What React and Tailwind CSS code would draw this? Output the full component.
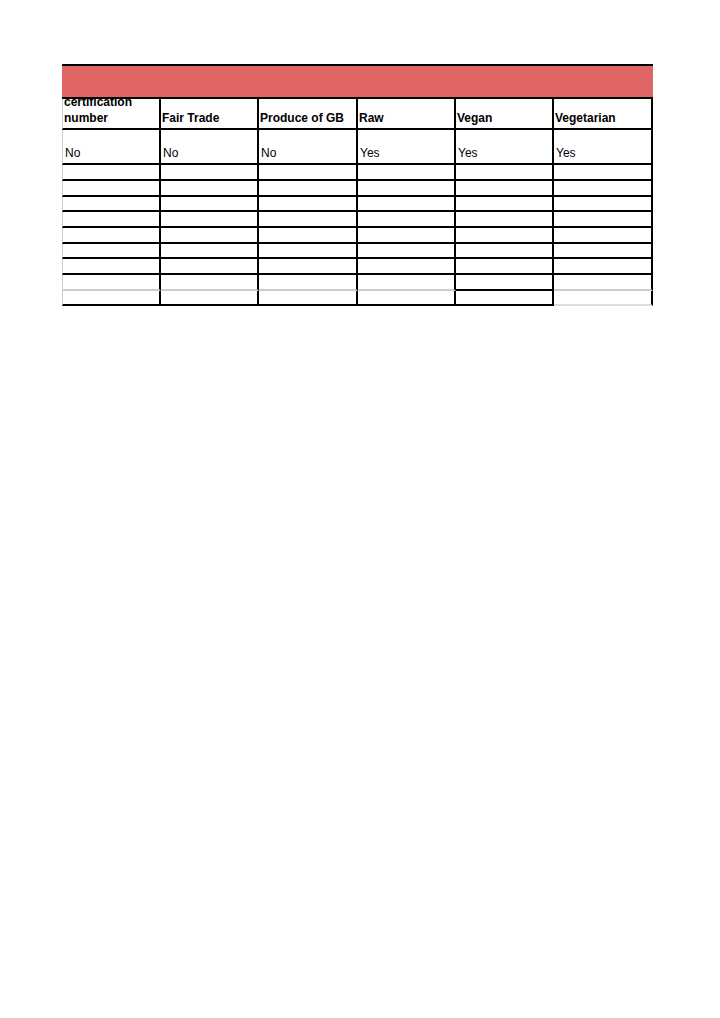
import React from "react";

const cols = ["w-[99px]", "w-[98px]", "w-[99px]", "w-[98px]", "w-[98px]", "w-[99px]"];

const headers = [
  ["certification", "number"],
  ["Fair Trade"],
  ["Produce of GB"],
  ["Raw"],
  ["Vegan"],
  ["Vegetarian"],
];

const values = ["No", "No", "No", "Yes", "Yes", "Yes"];

// heights of the empty rows, bottom border included
const emptyRows = ["h-[16px]", "h-[16px]", "h-[15px]", "h-[16px]", "h-[16px]", "h-[15px]", "h-[16px]"];

const Cell = ({ index, height, bottom = "border-b-black", children, className = "" }) => (
  <div
    className={`${cols[index]} ${height} ${bottom} border-b-2 border-r-2 border-r-black ${
      index === 0 ? "border-l border-l-[#cccccc]" : ""
    } flex items-end overflow-hidden pl-[1px] ${className}`}
  >
    {children}
  </div>
);

const App = () => {
  return (
    <div className="min-h-[1018px] bg-white pt-[64px] pl-[62px] font-['Liberation_Sans',Arial,sans-serif] text-[12px] text-black">
      <div className="w-[591px]">
        <div className="h-[2px] bg-black" />
        <div className="h-[31px] bg-[#e06666]" />

        {/* header row */}
        <div className="flex border-t-2 border-black">
          {headers.map((lines, i) => (
            <Cell key={i} index={i} height="h-[31px]" className="font-bold">
              <div className="leading-[16px] pb-[2px]">
                {lines.map((l) => (
                  <div key={l}>{l}</div>
                ))}
              </div>
            </Cell>
          ))}
        </div>

        {/* first data row */}
        <div className="flex">
          {values.map((v, i) => (
            <Cell key={i} index={i} height="h-[35px]">
              <div className="leading-[14px] pb-[3px] pl-[1px]">{v}</div>
            </Cell>
          ))}
        </div>

        {emptyRows.map((h, r) => (
          <div key={r} className="flex">
            {cols.map((_, i) => (
              <Cell key={i} index={i} height={h} />
            ))}
          </div>
        ))}

        <div className="flex">
          {cols.map((_, i) => (
            <Cell
              key={i}
              index={i}
              height="h-[16px]"
              bottom={i === 4 ? "border-b-black" : "border-b-[#cccccc]"}
            />
          ))}
        </div>

        <div className="flex">
          {cols.map((_, i) => (
            <Cell
              key={i}
              index={i}
              height="h-[15px]"
              bottom={i === 5 ? "border-b-[#dddddd]" : "border-b-black"}
            />
          ))}
        </div>
      </div>
    </div>
  );
};

export default App;
